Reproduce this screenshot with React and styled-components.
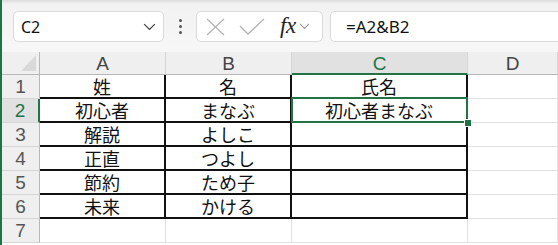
import React from "react";
import styled, { createGlobalStyle, css } from "styled-components";

const GREEN = "#217346";

const GlobalStyle = createGlobalStyle`
  * { box-sizing: border-box; }
  body {
    margin: 0;
    background: #ffffff;
    font-family: "Noto Sans", "Noto Sans CJK JP", sans-serif;
  }
`;

const Window = styled.div`
  width: 558px;
  height: 245px;
  overflow: hidden;
  border-left: 2px solid ${GREEN};
  display: flex;
  flex-direction: column;
  background: #ffffff;
`;

const Toolbar = styled.div`
  height: 52px;
  flex: none;
  display: flex;
  align-items: center;
  padding: 1px 0 0 11px;
  background: linear-gradient(#dcdcdc 0, #f2f2f2 4px, #f7f7f7 100%);
`;

const Field = styled.div`
  height: 31px;
  background: #ffffff;
  border: 1px solid #dadada;
  border-radius: 5px;
  display: flex;
  align-items: center;
`;

const NameBox = styled(Field)`
  width: 151px;
  padding: 0 7px 0 7px;
  justify-content: space-between;
  font-size: 16px;
  color: #111;
`;

const Dots = styled.div`
  width: 32px;
  display: flex;
  flex-direction: column;
  align-items: center;
  gap: 3px;

  span {
    width: 3px;
    height: 3px;
    border-radius: 50%;
    background: #555;
  }
`;

const FxBox = styled(Field)`
  width: 127px;
  padding: 0 6px 0 9px;
`;

const Gap = styled.span`
  width: ${(p) => p.$w}px;
  flex: none;
`;

const FxText = styled.span`
  font-family: "Liberation Serif", serif;
  font-style: italic;
  font-size: 23px;
  color: #222;
  margin: -2px 3px 0 15px;
  letter-spacing: -0.5px;
`;

const FormulaBox = styled(Field)`
  flex: 1;
  margin-left: 7px;
  border-right: none;
  border-radius: 5px 0 0 5px;
  padding-left: 15px;
  font-size: 17px;
  color: #111;
`;

const Grid = styled.div`
  display: grid;
  grid-template-columns: 38px 126px 126px 176px 1fr;
  grid-template-rows: 23px repeat(7, 24px);
  font-family: "Noto Sans CJK JP", "Noto Sans", sans-serif;
`;

const Corner = styled.div`
  background: #efefef;
  border-right: 1px solid #b8b8b8;
  border-bottom: 1px solid #b8b8b8;
  display: flex;
  align-items: flex-end;
  justify-content: flex-end;
  padding: 0 3px 3px 0;

  &::after {
    content: "";
    width: 15px;
    height: 16px;
    background: #d9d9d9;
    clip-path: polygon(100% 0, 100% 100%, 0 100%);
  }
`;

const headFont = css`
  font-family: "Liberation Sans", Arial, sans-serif;
  font-size: 19px;
  display: flex;
  align-items: center;
  justify-content: center;
  line-height: 1;
`;

const ColHead = styled.div`
  ${headFont}
  background: ${(p) => (p.$active ? "#e1e1e1" : "#efefef")};
  border-right: 1px solid #d6d6d6;
  border-bottom: ${(p) => (p.$active ? `2px solid ${GREEN}` : "1px solid #b8b8b8")};
  color: ${(p) => (p.$active ? GREEN : "#444")};
  padding-top: 1px;
`;

const RowHead = styled.div`
  ${headFont}
  background: ${(p) => (p.$active ? "#e1e1e1" : "#efefef")};
  border-right: ${(p) => (p.$active ? `2px solid ${GREEN}` : "1px solid #b8b8b8")};
  border-bottom: 1px solid #d6d6d6;
  color: ${(p) => (p.$active ? GREEN : "#555")};
`;

const Cell = styled.div`
  position: relative;
  border-right: 1px solid #e1e1e1;
  border-bottom: 1px solid #e1e1e1;
  font-size: 18px;
  color: #111;
  display: flex;
  align-items: center;
  justify-content: center;
  line-height: 1;
  white-space: nowrap;

  ${(p) =>
    p.$table &&
    css`
      border-right: 2px solid #111;
      border-bottom: 2px solid #111;
    `}

  ${(p) =>
    p.$selected &&
    css`
      &::after {
        content: "";
        position: absolute;
        left: -1px;
        top: -2px;
        right: -2px;
        bottom: -2px;
        border: 2px solid ${GREEN};
        pointer-events: none;
      }
    `}
`;

const Handle = styled.span`
  position: absolute;
  right: -5px;
  bottom: -5px;
  width: 6px;
  height: 6px;
  background: ${GREEN};
  outline: 1px solid #fff;
  z-index: 2;
`;

const Chevron = ({ color = "#444", size = 13 }) => (
  <svg width={size} height={size * 0.6} viewBox="0 0 13 8" fill="none">
    <path d="M1 1.2 L6.5 6.6 L12 1.2" stroke={color} strokeWidth="1.3" />
  </svg>
);

const Cross = () => (
  <svg width="19" height="18" viewBox="0 0 19 18" fill="none">
    <path d="M1 1 L18 17 M18 1 L1 17" stroke="#b4b4b4" strokeWidth="1.3" />
  </svg>
);

const Check = () => (
  <svg width="26" height="17" viewBox="0 0 26 17" fill="none">
    <path d="M1 8 L9 16 L25 1" stroke="#b4b4b4" strokeWidth="1.3" />
  </svg>
);

const rows = [
  ["姓", "名", "氏名"],
  ["初心者", "まなぶ", "初心者まなぶ"],
  ["解説", "よしこ", ""],
  ["正直", "つよし", ""],
  ["節約", "ため子", ""],
  ["未来", "かける", ""],
  null,
];

const cols = ["A", "B", "C", "D"];

export default function App() {
  return (
    <>
      <GlobalStyle />
      <Window>
        <Toolbar>
          <NameBox>
            <span>C2</span>
            <Chevron />
          </NameBox>
          <Dots>
            <span />
            <span />
            <span />
          </Dots>
          <FxBox>
            <Cross />
            <Gap $w={14} />
            <Check />
            <FxText>fx</FxText>
            <Chevron color="#9a9a9a" size={11} />
          </FxBox>
          <FormulaBox>=A2&amp;B2</FormulaBox>
        </Toolbar>
        <Grid>
          <Corner />
          {cols.map((c) => (
            <ColHead key={c} $active={c === "C"}>
              {c}
            </ColHead>
          ))}
          {rows.map((r, i) => (
            <React.Fragment key={i}>
              <RowHead $active={i === 1}>{i + 1}</RowHead>
              {[0, 1, 2].map((j) => (
                <Cell key={j} $table={!!r} $selected={i === 1 && j === 2}>
                  {r ? r[j] : ""}
                  {i === 1 && j === 2 && <Handle />}
                </Cell>
              ))}
              <Cell />
            </React.Fragment>
          ))}
        </Grid>
      </Window>
    </>
  );
}
